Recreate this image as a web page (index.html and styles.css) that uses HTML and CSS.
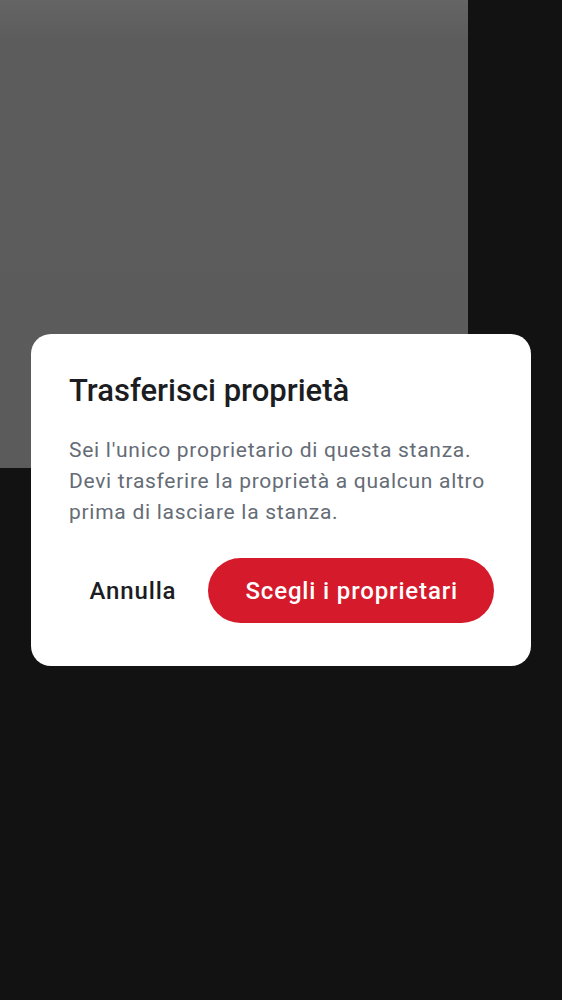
FILE: index.html
```html
<!DOCTYPE html>
<html lang="it">
<head>
<meta charset="utf-8">
<title>Trasferisci proprietà</title>
<link rel="stylesheet" href="styles.css">
</head>
<body>
<div class="screen">
  <div class="media"></div>
</div>
<div class="overlay">
  <div class="dialog" role="dialog">
    <h2 class="title">Trasferisci proprietà</h2>
    <p class="text">Sei l'unico proprietario di questa stanza. Devi trasferire la proprietà a qualcun altro prima di lasciare la stanza.</p>
    <div class="actions">
      <button class="btn btn-text">Annulla</button>
      <button class="btn btn-primary">Scegli i proprietari</button>
    </div>
  </div>
</div>
</body>
</html>
```
FILE: styles.css
```css
html, body {
  margin: 0;
  padding: 0;
  height: 100%;
  background: #121212;
  font-family: Roboto, "Noto Sans", "Liberation Sans", sans-serif;
}
.screen {
  height: 1000px;
}
.media {
  width: 468px;
  height: 468px;
  background: linear-gradient(to bottom, #656565 0px, #5c5c5c 40px, #5b5b5b 468px);
}
.overlay {
  position: fixed;
  inset: 0;
  display: flex;
  align-items: center;
  justify-content: center;
}
.dialog {
  width: 500px;
  box-sizing: border-box;
  background: #ffffff;
  border-radius: 20px;
  padding: 39px 37px 43px 38px;
}
.title {
  margin: 0;
  font-size: 31px;
  line-height: 36px;
  font-weight: 500;
  color: #1b1d22;
  letter-spacing: 0;
}
.text {
  margin: 26px 0 0;
  font-size: 21px;
  line-height: 31px;
  color: #656c76;
  letter-spacing: 0.72px;
}
.actions {
  margin-top: 30px;
  display: flex;
  justify-content: flex-end;
  align-items: center;
  gap: 12px;
}
.btn {
  font-family: inherit;
  font-size: 24px;
  font-weight: 500;
  border: none;
  height: 65px;
  border-radius: 33px;
  cursor: pointer;
  letter-spacing: 0.85px;
  white-space: nowrap;
  flex-shrink: 0;
}
.btn-text {
  background: transparent;
  color: #1b1d22;
  padding: 0 20px;
}
.btn-primary {
  background: #d51a2b;
  color: #ffffff;
  padding: 0 36px 0 37px;
}
```
